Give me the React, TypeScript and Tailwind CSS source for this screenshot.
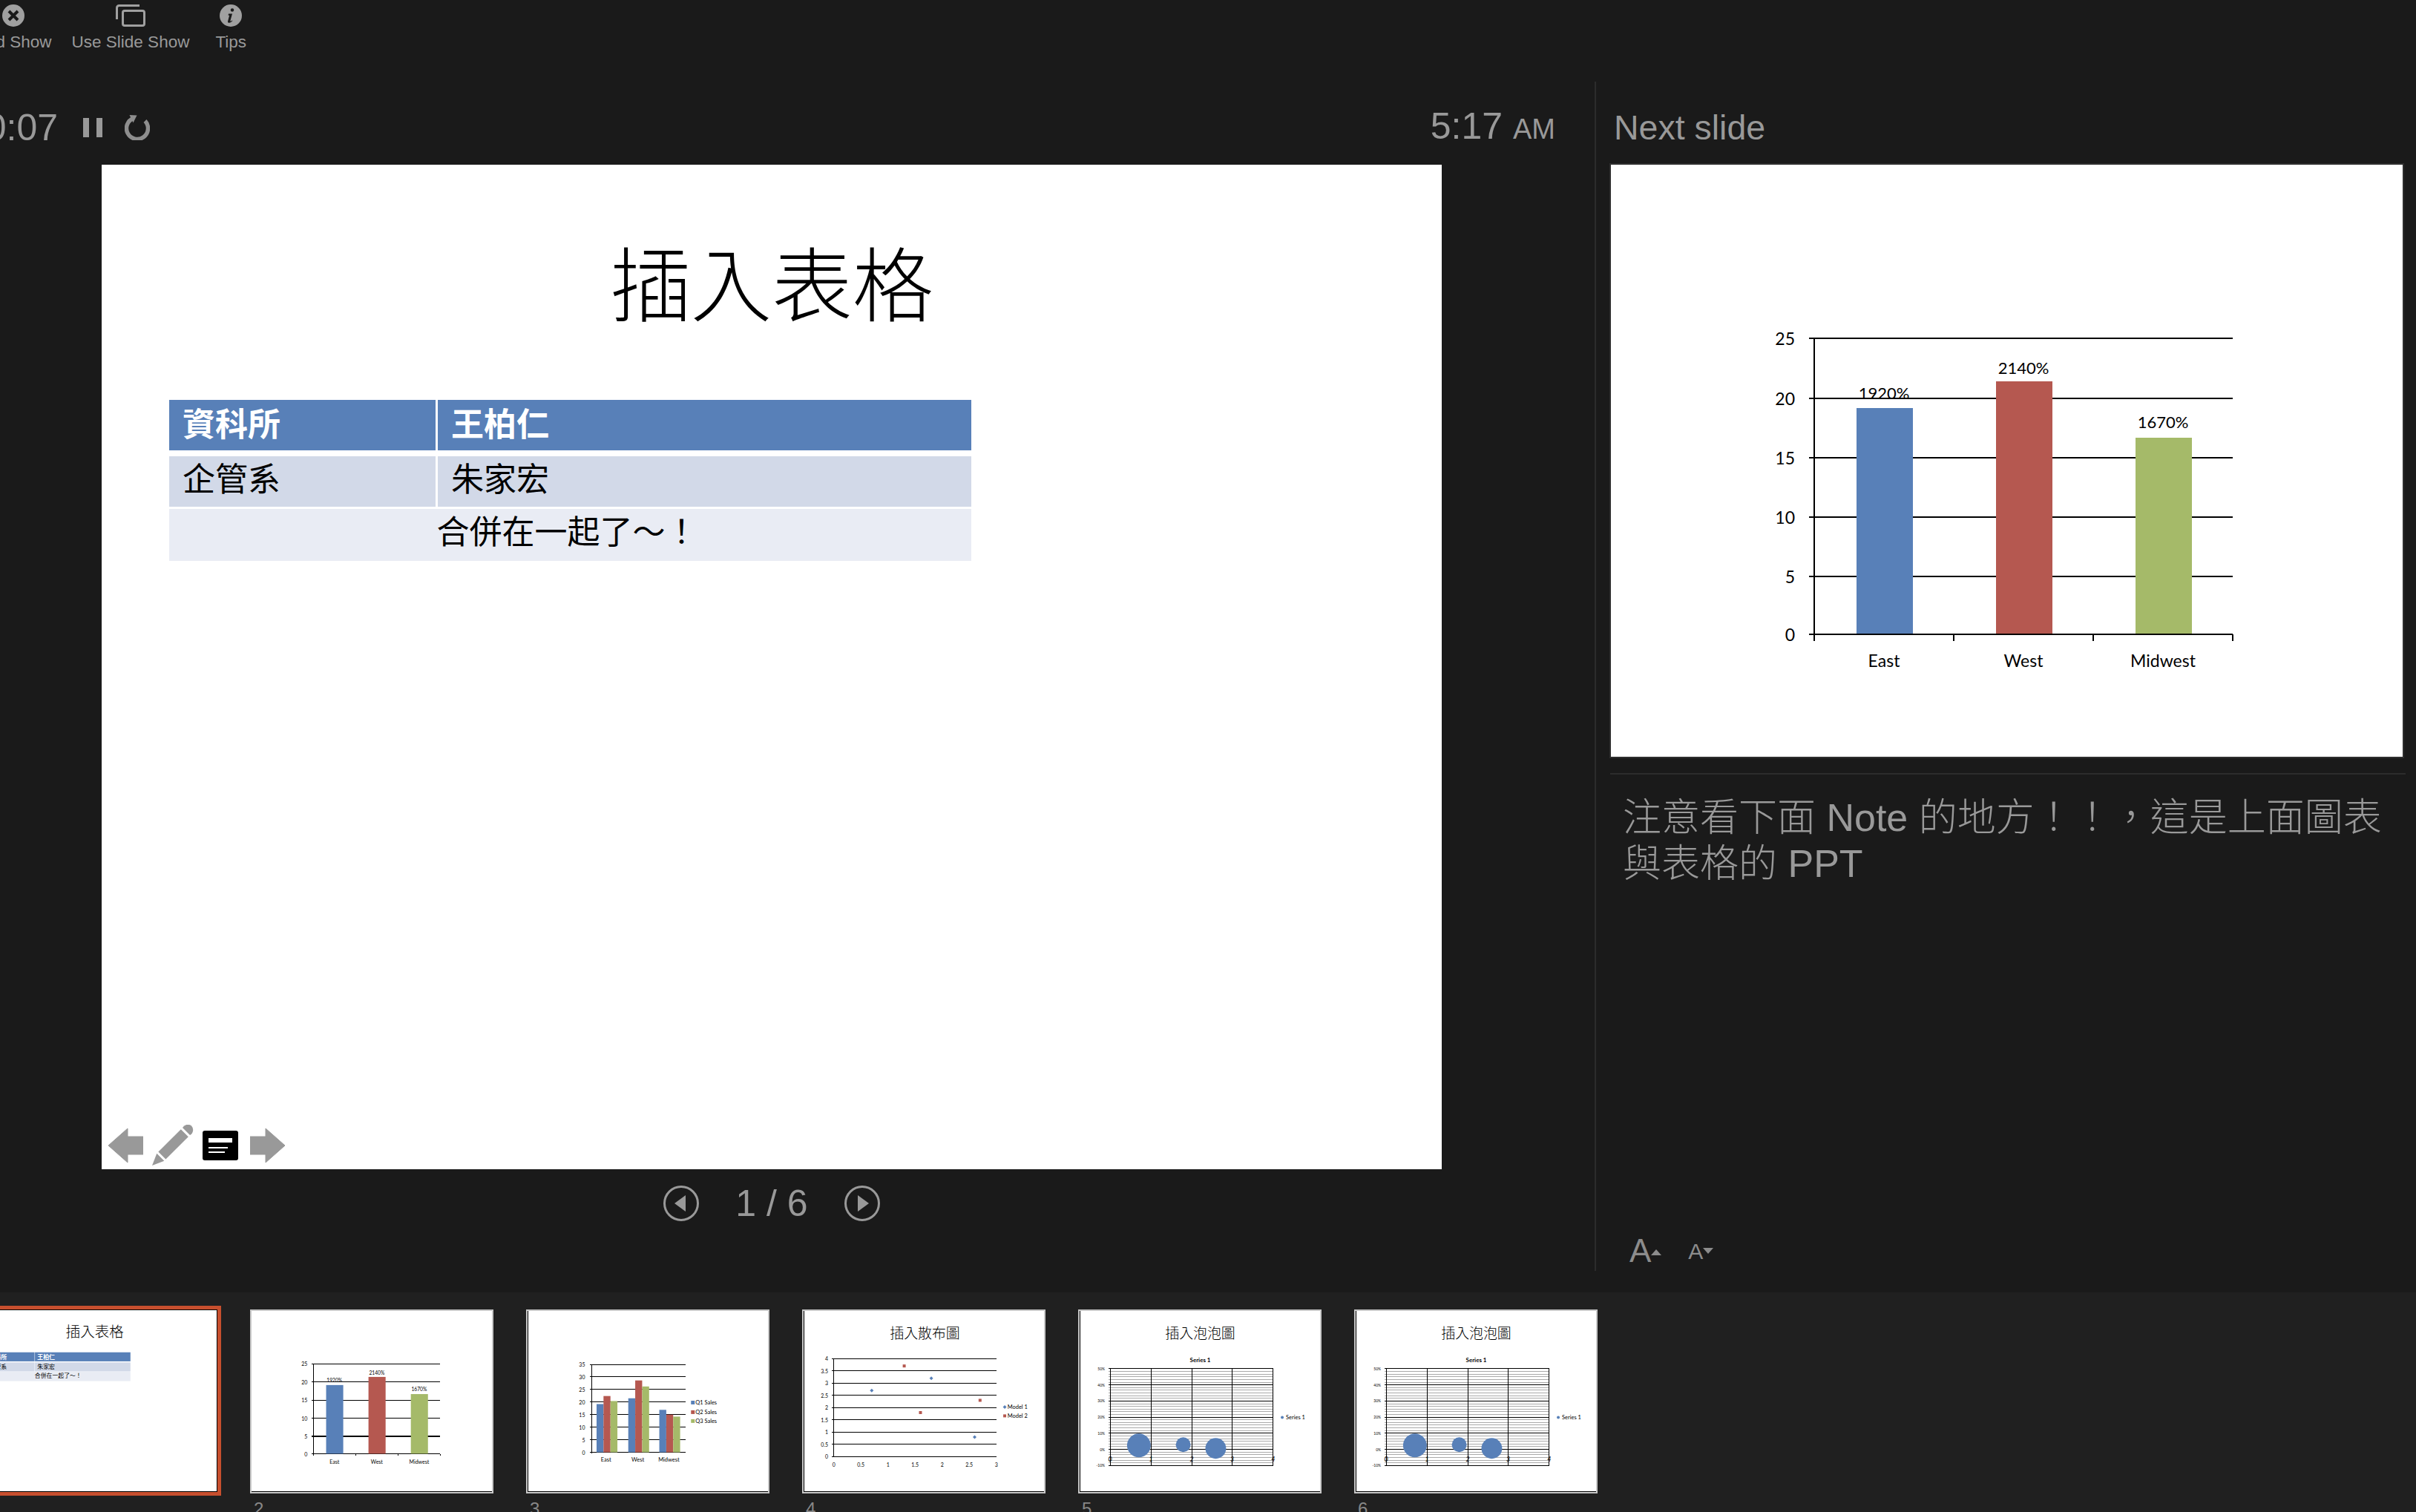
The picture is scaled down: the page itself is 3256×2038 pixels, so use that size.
import React from "react";

const cjk = "font-['Liberation_Sans','Noto_Sans_CJK_TC',sans-serif]";
const chartFont = "font-['Lato','Noto_Sans_CJK_TC',sans-serif]";

const ToolButton = ({ label, icon, className }: { label: string; icon: React.ReactNode; className?: string }) => (
  <div className={`flex flex-col items-center ${className ?? ""}`}>
    {icon}
    <span className="mt-[7px] text-[22.5px] leading-[28px] whitespace-nowrap text-[#999]">{label}</span>
  </div>
);

const CloseIcon = () => (
  <svg width="30" height="30" viewBox="0 0 30 30">
    <circle cx="15" cy="15" r="15" fill="#a0a0a0" />
    <path d="M9 9l12 12M21 9L9 21" stroke="#1a1a1a" strokeWidth="4" />
  </svg>
);

const ScreensIcon = () => (
  <svg width="40" height="30" viewBox="0 0 40 30" fill="none" stroke="#a0a0a0" strokeWidth="3">
    <path d="M1.5 20V4.5a3 3 0 0 1 3-3H32" />
    <rect x="9.5" y="8.5" width="29" height="20" rx="2.5" />
  </svg>
);

const InfoIcon = () => (
  <svg width="30" height="30" viewBox="0 0 30 30">
    <circle cx="15" cy="15" r="15" fill="#a0a0a0" />
    <circle cx="17" cy="7.5" r="2.2" fill="#1a1a1a" />
    <path d="M12 12.5h5l-2.6 9.5c-.2.8.6 1 2.4-.6l.6.7c-2 2.200-3.400 2.900-5 2.700-1.300-.2-1.600-1.100-1.300-2.200l2-7.900h-1.500z" fill="#1a1a1a" />
  </svg>
);

const ResetIcon = () => (
  <svg width="34" height="34" viewBox="0 0 34 34" fill="none">
    <path d="M27.500 8a14.500 14.500 0 1 1-15.500-3.600" stroke="#8e8e8e" strokeWidth="5.500" />
    <path d="M6.500 0l10 .5-5 10z" fill="#8e8e8e" />
  </svg>
);

const Arrow = ({ flip }: { flip?: boolean }) => (
  <svg width="48" height="48" viewBox="0 0 48 48" className={flip ? "-scale-x-100" : ""}>
    <path d="M1 24L27 1v11h21v24H27v11z" fill="#999" stroke="#999" strokeWidth="1" strokeLinejoin="round" />
  </svg>
);

const PencilIcon = () => (
  <svg width="58" height="56" viewBox="0 0 58 56" fill="#999">
    <path d="M1 55l6.300-16.300 10 10z" />
    <path d="M9.400 36.600l10 10 30.400-30.400-10-10z" />
    <path d="M42 4a8 8 0 0 1 12-2.500a8 8 0 0 1-2 12.500z" />
  </svg>
);

const NotesIcon = () => (
  <svg width="48" height="40" viewBox="0 0 48 40">
    <rect width="48" height="40" rx="3" fill="#000" />
    <rect x="8" y="10" width="32" height="6" fill="#fff" />
    <rect x="8" y="22" width="26" height="2" fill="#fff" />
    <rect x="8" y="28" width="22" height="2" fill="#fff" />
  </svg>
);

const PagerButton = ({ next }: { next?: boolean }) => (
  <svg width="48" height="48" viewBox="0 0 48 48">
    <circle cx="24" cy="24" r="22.500" fill="none" stroke="#999" strokeWidth="3" />
    <path d={next ? "M18 13l15 11-15 11z" : "M30 13L15 24l15 11z"} fill="#999" />
  </svg>
);

const TableSlide = ({ tools }: { tools?: boolean }) => (
  <div className={`relative w-[1806px] h-[1354px] bg-white ${cjk}`}>
    <h1 className="pt-[100px] h-[317px] text-center text-[109px] leading-[130px] font-light text-black">插入表格</h1>
    <div className="ml-[91px] w-[1081px] text-[44px] leading-[52px]">
      <div className="flex gap-[3px] h-[68px] font-bold text-white">
        <div className="w-[359px] bg-[#5880b8] pl-[18px] pt-[8px]">資科所</div>
        <div className="flex-1 bg-[#5880b8] pl-[18px] pt-[8px]">王柏仁</div>
      </div>
      <div className="flex gap-[3px] h-[68px] mt-[8px] text-black">
        <div className="w-[359px] bg-[#d2d9e8] pl-[18px] pt-[6px]">企管系</div>
        <div className="flex-1 bg-[#d2d9e8] pl-[18px] pt-[6px]">朱家宏</div>
      </div>
      <div className="h-[70px] mt-[3px] bg-[#e9ecf4] pr-[8px] pt-[6px] text-center text-black">合併在一起了～！</div>
    </div>
    {tools && (
      <div className="absolute left-[8px] top-[1294px] h-[56px] flex items-center gap-[11px]">
        <Arrow />
        <PencilIcon />
        <NotesIcon />
        <div className="ml-[5px]">
          <Arrow flip />
        </div>
      </div>
    )}
  </div>
);

const BarSlide = ({ thumb }: { thumb?: boolean }) => {
  const grid = [234, 315, 395, 475, 555, 633];
  const bars = [
    { x: 331, top: 328, fill: "#5880b8", label: "1920%", ly: 307, name: "East" },
    { x: 519, top: 292, fill: "#b55850", label: "2140%", ly: 273, name: "West" },
    { x: 707, top: 368, fill: "#a5ba69", label: "1670%", ly: 346, name: "Midwest" },
  ];
  const sw = thumb ? 3.4 : 2;
  return (
    <svg viewBox="0 0 1067 798" preserveAspectRatio="none" className={`block w-full h-full ${chartFont}`}>
      {grid.map((y) => (
        <line key={y} x1="267" x2="838" y1={y} y2={y} stroke="#000" strokeWidth={sw} shapeRendering="crispEdges" />
      ))}
      <line x1="274" x2="274" y1="234" y2="642" stroke="#000" strokeWidth={sw} shapeRendering="crispEdges" />
      {[274, 462, 650, 838].map((x) => (
        <line key={x} x1={x} x2={x} y1="633" y2="642" stroke="#000" strokeWidth={sw} shapeRendering="crispEdges" />
      ))}
      {["25", "20", "15", "10", "5", "0"].map((t, i) => (
        <text key={t} x="248" y={grid[i]} textAnchor="end" dominantBaseline="central" fontSize="23">{t}</text>
      ))}
      {bars.map((b) => (
        <g key={b.name}>
          <rect x={b.x} y={b.top} width="76" height={632 - b.top} fill={b.fill} />
          <text x={b.x + 37} y={b.ly} textAnchor="middle" dominantBaseline="central" fontSize="22">{b.label}</text>
          <text x={b.x + 37} y="668" textAnchor="middle" dominantBaseline="central" fontSize="23">{b.name}</text>
        </g>
      ))}
    </svg>
  );
};

const ClusterSlide = () => {
  const groups = [
    { name: "East", x: 94.2, lx: 107, vals: [19.2, 22.4, 20.4] },
    { name: "West", x: 137.1, lx: 150, vals: [21.5, 28.6, 26.2] },
    { name: "Midwest", x: 179.1, lx: 192, vals: [16.9, 15, 14.2] },
  ];
  const colors = ["#5880b8", "#b55850", "#a5ba69"];
  const ticks = [35, 30, 25, 20, 15, 10, 5, 0];
  return (
    <svg viewBox="2 2 324 244" className={`block w-full h-full ${chartFont}`}>
      {ticks.map((t) => (
        <g key={t}>
          <line x1="85" x2="214.500" y1={193.3 - t * 3.4} y2={193.3 - t * 3.4} stroke="#000" strokeWidth="1" shapeRendering="crispEdges" />
          <text x="78.600" y={193.3 - t * 3.4} textAnchor="end" dominantBaseline="central" fontSize="7">{t}</text>
        </g>
      ))}
      <line x1="87.600" x2="87.600" y1="74.300" y2="195" stroke="#000" strokeWidth="1" shapeRendering="crispEdges" />
      {groups.map((g) => (
        <g key={g.name}>
          {g.vals.map((v, i) => (
            <rect key={i} x={g.x + i * 9.4} y={193.3 - v * 3.4} width="9.400" height={v * 3.4} fill={colors[i]} />
          ))}
          <text x={g.lx} y="203" textAnchor="middle" dominantBaseline="central" fontSize="7.500">{g.name}</text>
        </g>
      ))}
      {["Q1 Sales", "Q2 Sales", "Q3 Sales"].map((s, i) => (
        <g key={s}>
          <rect x="222" y={[123.5, 136.5, 148.5][i]} width="5" height="5" fill={colors[i]} />
          <text x="228" y={[126, 139, 151][i]} dominantBaseline="central" fontSize="7.500">{s}</text>
        </g>
      ))}
    </svg>
  );
};

const ScatterSlide = () => {
  const px = (v: number) => 41.7 + v * 73.3;
  const py = (v: number) => 199.3 - v * 33.2;
  const ys = [4, 3.5, 3, 2.5, 2, 1.5, 1, 0.5, 0];
  const xs = [0, 0.5, 1, 1.5, 2, 2.5, 3];
  const model1 = [[0.7, 2.7], [1.8, 3.2], [2.6, 0.8]];
  const model2 = [[1.3, 3.7], [1.6, 1.8], [2.7, 2.3]];
  return (
    <svg viewBox="2 2 324 244" className={`block w-full h-full ${chartFont}`}>
      <text x="165" y="32" textAnchor="middle" dominantBaseline="central" fontSize="19" fontWeight="300">插入散布圖</text>
      {ys.map((t) => (
        <g key={t}>
          <line x1="39" x2="261.600" y1={py(t)} y2={py(t)} stroke="#000" strokeWidth="1" shapeRendering="crispEdges" />
          <text x="34" y={py(t)} textAnchor="end" dominantBaseline="central" fontSize="7">{t}</text>
        </g>
      ))}
      <line x1="41.700" x2="41.700" y1="66.300" y2="199.300" stroke="#000" strokeWidth="1" shapeRendering="crispEdges" />
      {xs.map((t) => (
        <text key={t} x={px(t)} y="210" textAnchor="middle" dominantBaseline="central" fontSize="7">{t}</text>
      ))}
      {model1.map(([x, y]) => (
        <path key={x} d={`M${px(x)} ${py(y) - 2.5}l2.500 2.500-2.500 2.500-2.500-2.500z`} fill="#5880b8" />
      ))}
      {model2.map(([x, y]) => (
        <rect key={x} x={px(x) - 2} y={py(y) - 2} width="4" height="4" fill="#b55850" />
      ))}
      <path d="M273 129.500l2.500 2.500-2.500 2.500-2.500-2.500z" fill="#5880b8" />
      <rect x="271" y="142" width="4" height="4" fill="#b55850" />
      <text x="276.700" y="132" dominantBaseline="central" fontSize="7.500">Model 1</text>
      <text x="276.700" y="144" dominantBaseline="central" fontSize="7.500">Model 2</text>
    </svg>
  );
};

const BubbleSlide = () => {
  const major = [80.3, 102.1, 123.9, 145.7, 167.5, 189.3, 211.3];
  const labels = ["50%", "40%", "30%", "20%", "10%", "0%", "-10%"];
  const minor = major.slice(0, 6).flatMap((y) => [1, 2, 3, 4, 5].map((i) => y + (i * 21.8) / 6));
  return (
    <svg viewBox="2 2 324 244" className={`block w-full h-full ${chartFont}`}>
      <text x="164" y="32" textAnchor="middle" dominantBaseline="central" fontSize="19" fontWeight="300">插入泡泡圖</text>
      <text x="164" y="68" textAnchor="middle" dominantBaseline="central" fontSize="8" fontWeight="700">Series 1</text>
      {minor.map((y) => (
        <line key={y} x1="40" x2="262.700" y1={y} y2={y} stroke="#aaa" strokeWidth="1" shapeRendering="crispEdges" />
      ))}
      {major.map((y, i) => (
        <g key={y}>
          <line x1="40" x2="262.700" y1={y} y2={y} stroke="#000" strokeWidth="1" shapeRendering="crispEdges" />
          <text x="35" y={y} textAnchor="end" dominantBaseline="central" fontSize="5">{labels[i]}</text>
        </g>
      ))}
      {[42, 97.4, 152.6, 207.4, 262.7].map((x, i) => (
        <g key={x}>
          <line x1={x} x2={x} y1="80.300" y2="211.300" stroke="#000" strokeWidth="1" shapeRendering="crispEdges" />
          <text x={x} y="202" textAnchor="middle" dominantBaseline="central" fontSize="9" fontStyle="italic">{i}</text>
        </g>
      ))}
      <circle cx="81" cy="184" r="16" fill="#5880b8" />
      <circle cx="141" cy="183" r="10" fill="#5880b8" />
      <circle cx="185" cy="188" r="14" fill="#5880b8" />
      <circle cx="275" cy="146" r="2" fill="#5880b8" />
      <text x="280" y="146" dominantBaseline="central" fontSize="7.500">Series 1</text>
    </svg>
  );
};

const Thumb = ({ n, leftLine, children }: { n: number; leftLine?: boolean; children: React.ReactNode }) => (
  <div className="w-[328px] shrink-0">
    <div className="h-[248px] border-2 border-[#c8c8c8]">
      <div className={`h-full overflow-hidden bg-white border-b border-black ${leftLine ? "border-l" : ""}`}>{children}</div>
    </div>
    <div className="mt-[7px] pl-[5px] text-[24px] leading-[28px] text-[#888]">{n}</div>
  </div>
);

const App: React.FC = () => {
  return (
    <div className="w-[3256px] h-[2038px] flex flex-col overflow-hidden bg-[#1a1a1a] font-['Liberation_Sans',sans-serif]">
      {/* top toolbar */}
      <div className="h-[110px] shrink-0 flex items-start pt-[6px] -ml-[33px] gap-[27px]">
        <ToolButton label="End Show" icon={<CloseIcon />} />
        <ToolButton label="Use Slide Show" icon={<ScreensIcon />} />
        <ToolButton label="Tips" icon={<InfoIcon />} className="ml-[8px]" />
      </div>

      <div className="h-[1632px] shrink-0 flex">
        {/* current slide column */}
        <div className="w-[2151px] h-[1603px] shrink-0 border-r-2 border-[#2c2c2c]">
          <div className="h-[112px] flex items-center justify-between pr-[53px] pt-[12px] text-[#999]">
            <div className="flex items-center">
              <div className="w-[78px] flex justify-end text-[50px] leading-[60px] whitespace-nowrap">0:00:07</div>
              <div className="ml-[34px] flex gap-[10px]">
                <div className="w-[8px] h-[26px] bg-[#999]" />
                <div className="w-[8px] h-[26px] bg-[#999]" />
              </div>
              <div className="ml-[30px]">
                <ResetIcon />
              </div>
            </div>
            <div className="text-[50px] leading-[60px] whitespace-nowrap">
              5:17 <span className="text-[38px]">AM</span>
            </div>
          </div>
          <div className="ml-[137px] w-[1806px]">
            <TableSlide tools />
            <div className="mt-[22px] flex items-center justify-center gap-[49px]">
              <PagerButton />
              <span className="text-[50px] leading-[48px] text-[#999]">1 / 6</span>
              <PagerButton next />
            </div>
          </div>
        </div>

        {/* next slide + notes column */}
        <div className="flex-1 flex flex-col">
          <div className="h-[112px] pl-[24px] pt-[12px] flex items-center text-[46.5px] leading-[60px] text-[#999]">
            Next slide
          </div>
          <div className="ml-[20px] w-[1067px] h-[798px] shrink-0 bg-white ring-2 ring-[#2e2e2e]">
            <BarSlide />
          </div>
          <div className="ml-[19px] mt-[22px] w-[1072px] h-[2px] bg-[#2c2c2c]" />
          <p className={`ml-[36px] mt-[27px] w-[1056px] text-[52px] leading-[62px] font-light text-[#999] ${cjk}`}>
            注意看下面 Note 的地方！！，這是上面圖表與表格的 PPT
          </p>
          <div className="mt-auto pb-[36px] pl-[45px] flex items-end text-[#8c8c8c]">
            <span className="text-[44px] leading-[40px]">A</span>
            <svg width="14" height="8" viewBox="0 0 14 8" className="mb-[14px]">
              <path d="M7 0l7 8H0z" fill="#8c8c8c" />
            </svg>
            <span className="ml-[36px] mb-[4px] text-[30px] leading-[30px]">A</span>
            <svg width="14" height="8" viewBox="0 0 14 8" className="mb-[16px]">
              <path d="M0 0h14L7 8z" fill="#8c8c8c" />
            </svg>
          </div>
        </div>
      </div>

      {/* thumbnail strip */}
      <div className="h-[296px] shrink-0 flex items-start gap-[44px] bg-[#202020] pt-[23px] -ml-[35px]">
        <div className="w-[328px] h-[246px] shrink-0 overflow-hidden bg-white border border-black outline-[5px] outline-[#c74f2e]">
          <div className="origin-top-left scale-[0.179]">
            <TableSlide />
          </div>
        </div>
        <Thumb n={2}>
          <BarSlide thumb />
        </Thumb>
        <Thumb n={3} leftLine>
          <ClusterSlide />
        </Thumb>
        <Thumb n={4} leftLine>
          <ScatterSlide />
        </Thumb>
        <Thumb n={5} leftLine>
          <BubbleSlide />
        </Thumb>
        <Thumb n={6} leftLine>
          <BubbleSlide />
        </Thumb>
      </div>
    </div>
  );
};

export default App;
